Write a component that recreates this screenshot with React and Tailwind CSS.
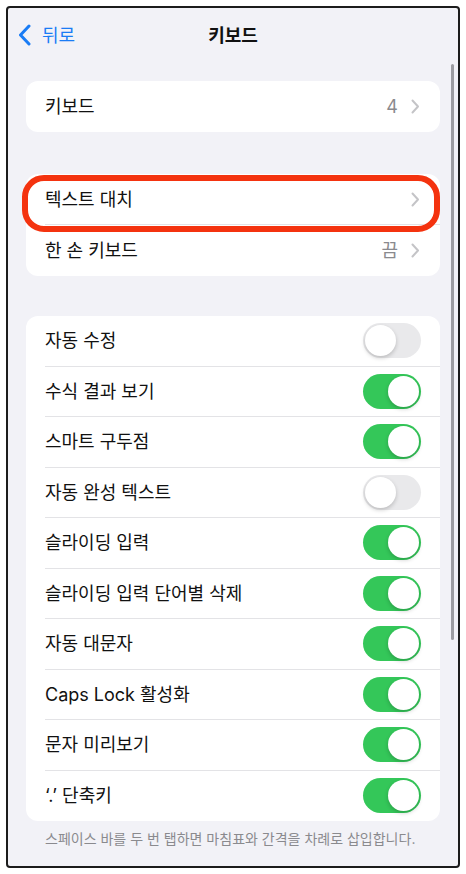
import React from 'react'

const font = { fontFamily: 'Inter, "Noto Sans CJK KR", sans-serif' }

const toggles = [
  { label: '자동 수정', on: false },
  { label: '수식 결과 보기', on: true },
  { label: '스마트 구두점', on: true },
  { label: '자동 완성 텍스트', on: false },
  { label: '슬라이딩 입력', on: true },
  { label: '슬라이딩 입력 단어별 삭제', on: true },
  { label: '자동 대문자', on: true },
  { label: 'Caps Lock 활성화', on: true },
  { label: '문자 미리보기', on: true },
  { label: '‘.’ 단축키', on: true },
]

function Chevron() {
  return (
    <svg width="9" height="15" viewBox="0 0 9 15" fill="none">
      <path d="M1.5 1.5L7 7.5L1.5 13.5" stroke="#c4c4c7" strokeWidth="2" strokeLinecap="round" strokeLinejoin="round" />
    </svg>
  )
}

function Toggle({ on }) {
  return (
    <div
      className={
        on
          ? 'w-[58px] h-[35px] rounded-full bg-[#34c759] flex items-center justify-end px-[2px]'
          : 'w-[58px] h-[35px] rounded-full bg-[#e9e9eb] flex items-center justify-start px-[2px]'
      }
    >
      <div className="w-[31px] h-[31px] rounded-full bg-white shadow-[0_2px_4px_rgba(0,0,0,0.2)]" />
    </div>
  )
}

function LinkRow({ label, value, last }) {
  return (
    <div className="h-[51px] pl-[19px] flex">
      <div className={`flex-1 flex items-center pr-[20px] ${last ? '' : 'border-b border-[#e3e3e6]'}`}>
        <span className="flex-1 text-[18px] text-[#111]">{label}</span>
        {value && <span className="text-[18px] text-[#8a8a8e] mr-[13px]">{value}</span>}
        <Chevron />
      </div>
    </div>
  )
}

export default function App() {
  return (
    <div className="w-[466px] h-[874px] bg-white p-[6px]" style={font}>
      <div className="relative h-full border-2 border-[#1c1c1c] rounded-[4px] bg-[#f2f2f7] overflow-hidden">
        <div className="h-[54px] grid grid-cols-3 items-center">
          <div className="flex items-center gap-[11px] pl-[10px]">
            <svg width="13" height="22" viewBox="0 0 13 22" fill="none">
              <path d="M11 2L2.5 11L11 20" stroke="#1a7cf5" strokeWidth="3" strokeLinecap="round" strokeLinejoin="round" />
            </svg>
            <span className="text-[18px] text-[#1a7cf5]">뒤로</span>
          </div>
          <div className="text-center text-[18px] font-semibold text-[#111]">키보드</div>
          <div />
        </div>

        <div className="px-[18px] pt-[19px]">
          <div className="bg-white rounded-[12px]">
            <LinkRow label="키보드" value="4" last />
          </div>

          <div className="bg-white rounded-[12px] mt-[42px]">
            <LinkRow label="텍스트 대치" />
            <LinkRow label="한 손 키보드" value="끔" last />
          </div>

          <div className="bg-white rounded-[12px] mt-[40px]">
            {toggles.map((t, i) => (
              <div key={t.label} className="h-[50.5px] pl-[19px] flex">
                <div
                  className={`flex-1 flex items-center pr-[19px] ${
                    i === toggles.length - 1 ? '' : 'border-b border-[#e3e3e6]'
                  }`}
                >
                  <span className="flex-1 text-[18px] text-[#111]">{t.label}</span>
                  <Toggle on={t.on} />
                </div>
              </div>
            ))}
          </div>

          <p className="px-[19px] pt-[7px] text-[14px] text-[#8a8a8e]">
            스페이스 바를 두 번 탭하면 마침표와 간격을 차례로 삽입합니다.
          </p>
        </div>

        {/* red marker scribble */}
        <div className="absolute left-[14px] top-[167px] w-[418px] h-[57px] border-[6px] border-[#f4330f] rounded-[22px]" />

        {/* scroll indicator */}
        <div className="absolute left-[443px] top-[56px] w-[3px] h-[576px] rounded-full bg-[#9c9ca1]" />
      </div>
    </div>
  )
}
